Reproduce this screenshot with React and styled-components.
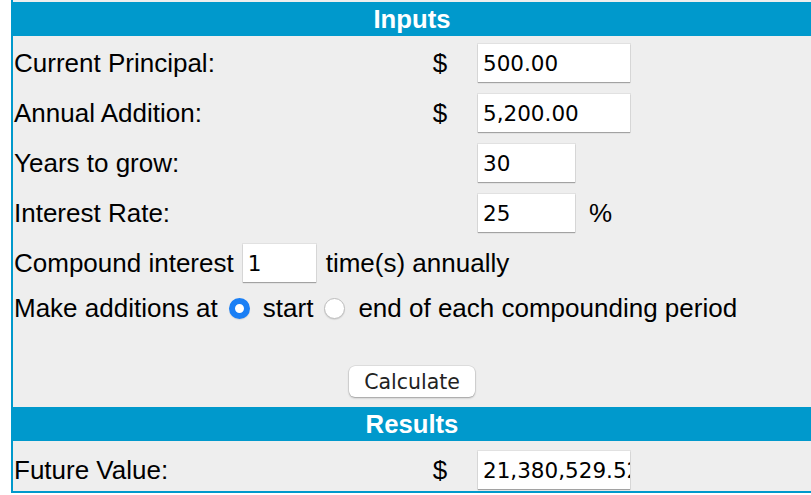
import React, {useState} from "react";
import styled, {createGlobalStyle} from "styled-components";

const GlobalStyle = createGlobalStyle`
  html, body {
    margin: 0;
    padding: 0;
    background: #ffffff;
    overflow: hidden;
  }
  body {
    font-family: "Liberation Sans", Arial, sans-serif;
  }
`;

const BLUE = "#0099cc";

const Calculator = styled.div`
  margin-left: 11px;
  border-left: 2px solid ${BLUE};
  border-bottom: 2px solid ${BLUE};
  background: #eeeeee;
  padding-top: 2px;
  color: #000;
  font-size: 26px;
`;

const SectionHeader = styled.div`
  height: 34px;
  line-height: 34px;
  background: ${BLUE};
  color: #ffffff;
  font-weight: bold;
  font-size: 25.7px;
  text-align: center;
  margin-bottom: ${({gapBelow}) => gapBelow || 0}px;
  margin-top: ${({gapAbove}) => gapAbove || 0}px;
`;

const Row = styled.div`
  display: grid;
  grid-template-columns: 402px 50px 1fr;
  align-items: center;
  height: 50px;
  box-sizing: border-box;
  padding: ${({pad}) => pad || "0"};
`;

const Label = styled.div`
  padding-left: 1px;
  white-space: nowrap;
`;

const Currency = styled.div`
  text-align: center;
`;

const Field = styled.div`
  display: flex;
  align-items: center;
  gap: 14px;
  padding-left: 13px;
`;

const TextInput = styled.input`
  box-sizing: border-box;
  width: ${({w}) => w}px;
  height: 38px;
  border: none;
  border-radius: 0;
  background: #ffffff;
  box-shadow: 0 1px 1px rgba(0, 0, 0, 0.28), 0 0 0 1px rgba(0, 0, 0, 0.05);
  padding: 0 0 0 5px;
  font-family: "DejaVu Sans", sans-serif;
  font-size: 21.5px;
  color: #000;
  outline: none;
`;

const InlineRow = styled.div`
  display: flex;
  align-items: center;
  height: ${({h}) => h}px;
  padding-left: 1px;
  white-space: nowrap;
`;

const Gap = styled.span`
  display: inline-block;
  width: ${({w}) => w}px;
`;

const Radio = styled.input.attrs({type: "radio"})`
  appearance: none;
  -webkit-appearance: none;
  box-sizing: border-box;
  width: 21px;
  height: 21px;
  margin: 0;
  border-radius: 50%;
  background: #ffffff;
  border: 1px solid #bdbdbd;
  box-shadow: 0 1px 1px rgba(0, 0, 0, 0.1);
  flex: none;

  &:checked {
    border: 6.5px solid #1a7ff5;
    background: #ffffff;
  }
`;

const ButtonRow = styled.div`
  display: flex;
  justify-content: center;
  padding: 38px 0 8px;
`;

const Button = styled.button`
  width: 126px;
  height: 31px;
  border: none;
  border-radius: 6px;
  background: #ffffff;
  box-shadow: 0 1px 2px rgba(0, 0, 0, 0.3), 0 0 0 0.5px rgba(0, 0, 0, 0.12);
  font-family: "DejaVu Sans", sans-serif;
  font-size: 20.5px;
  color: #222;
  padding: 0;
`;

const App = () => {
    const [timing, setTiming] = useState("start");

    return (
        <>
            <GlobalStyle/>
            <Calculator>
                <SectionHeader gapBelow={2}>Inputs</SectionHeader>

                <Row>
                    <Label>Current Principal:</Label>
                    <Currency>$</Currency>
                    <Field><TextInput w={152} defaultValue="500.00"/></Field>
                </Row>
                <Row>
                    <Label>Annual Addition:</Label>
                    <Currency>$</Currency>
                    <Field><TextInput w={152} defaultValue="5,200.00"/></Field>
                </Row>
                <Row>
                    <Label>Years to grow:</Label>
                    <Currency/>
                    <Field><TextInput w={97} defaultValue="30"/></Field>
                </Row>
                <Row>
                    <Label>Interest Rate:</Label>
                    <Currency/>
                    <Field><TextInput w={97} defaultValue="25"/>%</Field>
                </Row>

                <InlineRow h={50}>
                    Compound interest<Gap w={9}/>
                    <TextInput w={73} defaultValue="1"/>
                    <Gap w={10}/>time(s) annually
                </InlineRow>
                <InlineRow h={40}>
                    Make additions at<Gap w={11}/>
                    <Radio name="timing" checked={timing === "start"} onChange={() => setTiming("start")}/>
                    <Gap w={13}/>start<Gap w={11}/>
                    <Radio name="timing" checked={timing === "end"} onChange={() => setTiming("end")}/>
                    <Gap w={13}/>end of each compounding period
                </InlineRow>

                <ButtonRow>
                    <Button>Calculate</Button>
                </ButtonRow>

                <SectionHeader gapAbove={2}>Results</SectionHeader>
                <Row pad="10px 0 2px">
                    <Label>Future Value:</Label>
                    <Currency>$</Currency>
                    <Field><TextInput w={152} readOnly value="21,380,529.52"/></Field>
                </Row>
            </Calculator>
        </>
    );
};

export default App;
